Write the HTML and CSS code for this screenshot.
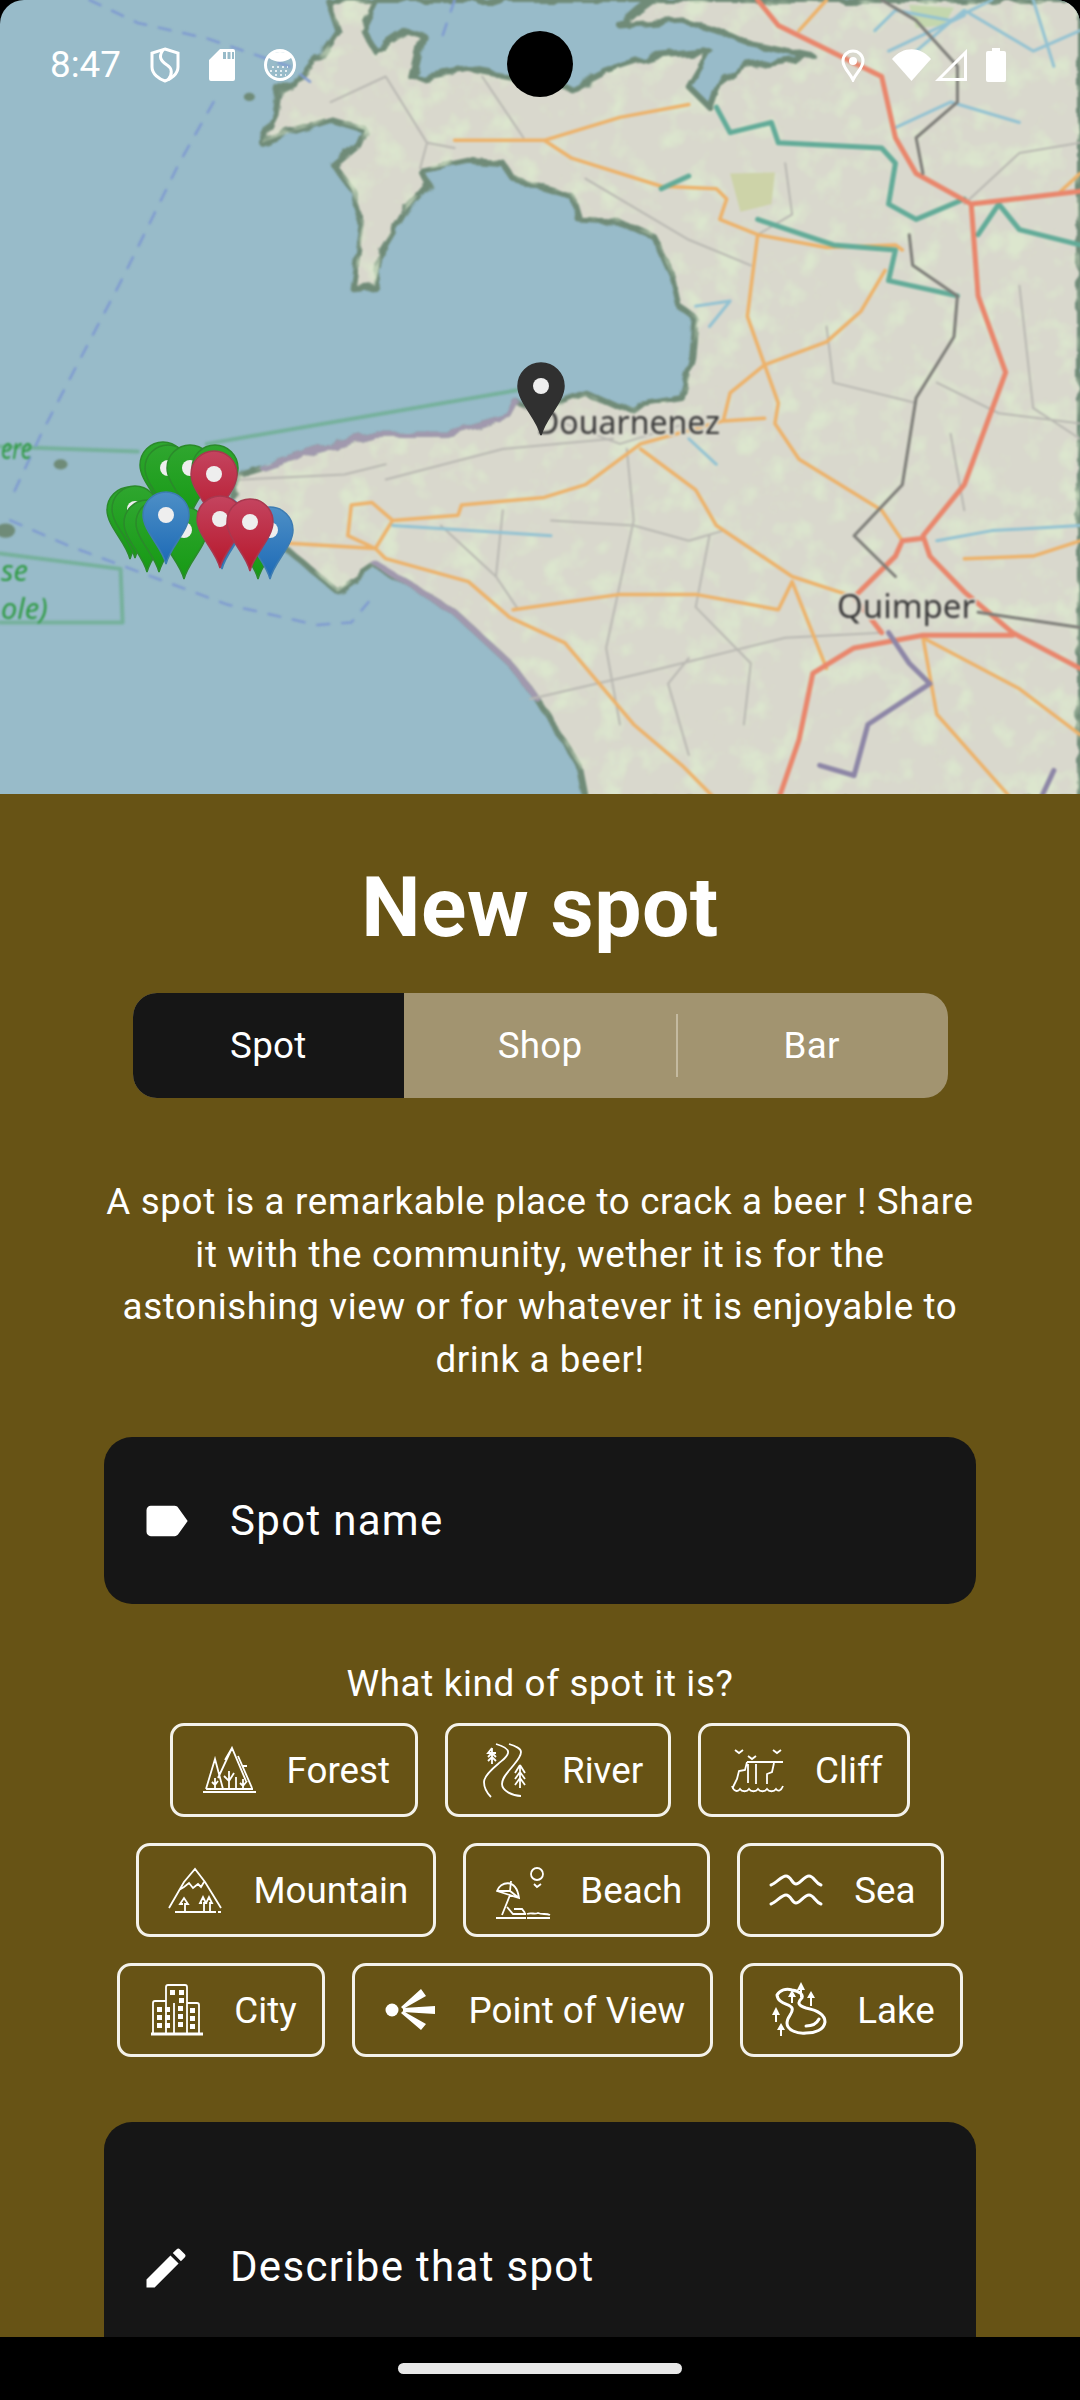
FILE: index.html
```html
<!DOCTYPE html>
<html>
	<head>
		<title>New spot</title>
		<link rel="stylesheet" href="styles.css">
	</head>
	<body>
		<div class="screen">
			<div class="map">
				<svg class="map-art" width="1080" height="800" viewBox="0 0 1080 800">
					<defs>
						<linearGradient id="gGreen" x1="0" y1="0" x2="0" y2="1"><stop offset="0" stop-color="#2fa62f"/><stop offset="1" stop-color="#169a14"/></linearGradient>
						<linearGradient id="gRed" x1="0" y1="0" x2="0" y2="1"><stop offset="0" stop-color="#c4445f"/><stop offset="1" stop-color="#b7182c"/></linearGradient>
						<linearGradient id="gBlue" x1="0" y1="0" x2="0" y2="1"><stop offset="0" stop-color="#4d8fc6"/><stop offset="1" stop-color="#1d6ab6"/></linearGradient>
						<g id="pin">
							<path class="pin-body" d="M0 0C-4-17-23-33-23-49A23 23 0 1 1 23-49C23-33 4-17 0 0Z"/>
							<circle class="pin-hole" cx="0" cy="-49" r="8"/>
						</g>
						<filter id="rough" x="-5%" y="-5%" width="110%" height="110%">
							<feTurbulence type="fractalNoise" baseFrequency=".05" numOctaves="2" seed="4"/>
							<feDisplacementMap in="SourceGraphic" scale="11"/>
						</filter>
						<filter id="mottle" x="0" y="0" width="100%" height="100%">
							<feTurbulence type="fractalNoise" baseFrequency=".035" numOctaves="3" seed="9"/>
							<feColorMatrix values="0 0 0 0 .72  0 0 0 0 .83  0 0 0 0 .62  3.5 0 0 0 -1.7"/>
							<feComposite in2="SourceAlpha" operator="in"/>
						</filter>
						<clipPath id="landClip">
							<path transform="scale(.6888 .5102)" d="M475 0L490 60 470 100 440 150 405 175 400 225 380 280 420 260 480 235 530 255 520 285 485 325 510 370 525 440 512 565 545 560 555 490 590 410 622 360 610 335 680 315 730 320 745 350 830 385 840 430 900 435 950 465 975 540 985 600 1010 625 1005 700 990 780 900 800 850 770 790 800 750 790 740 815 650 850 545 850 460 880 380 915 345 930 330 1060 420 1080 490 1160 545 1110 600 1150 660 1200 740 1300 780 1370 840 1500 850 1568 1568 1568 1568 0Z"/>
						</clipPath>
					</defs>

					<g class="blurred">
						<g filter="url(#rough)">
							<g transform="scale(.6888 .5102)">
								<path class="land" d="M475 0L490 60 470 100 440 150 405 175 400 225 380 280 420 260 480 235 530 255 520 285 485 325 510 370 525 440 512 565 545 560 555 490 590 410 622 360 610 335 680 315 730 320 745 350 830 385 840 430 900 435 950 465 975 540 985 600 1010 625 1005 700 990 780 900 800 850 770 790 800 750 790 740 815 650 850 545 850 460 880 380 915 345 930 330 1060 420 1080 490 1160 545 1110 600 1150 660 1200 740 1300 780 1370 840 1500 850 1568 1568 1568 1568 0Z"/>
							</g>
						</g>
						<g clip-path="url(#landClip)"><rect class="mottle" width="1080" height="800" filter="url(#mottle)"/></g>
						<g filter="url(#rough)">
							<g transform="scale(.6888 .5102)">
								<path class="water" d="M545 0L525 55 545 100 590 60 615 70 600 155 680 135 740 150 830 175 880 140 950 110 1030 100 1000 170 1030 210 1040 170 1080 130 1180 110 1090 85 1040 60 990 40 900 50 925 20 945 0Z"/>
								<path class="coast-purple" d="M750 790L740 815 650 850 545 850 460 880 380 915M545 1105L600 1150 660 1200 740 1300 780 1370"/>
							</g>
						</g>
						<g transform="scale(.6888 .5102)">
							<path class="patch" d="M1060 340L1125 338 1120 400 1075 415Z"/>
							<path class="patch-green" d="M1320 10L1385 15 1370 50 1330 55Z"/>
							<path class="grey" d="M480 200L560 150 620 280 660 290M620 280L610 330M700 150L760 270M850 350L1000 470 1090 520M1140 320L1150 420 1100 460M1200 640L1210 750 1330 790M1360 750L1450 810 1568 830M1400 400L1480 300 1568 280M760 800L900 870 1020 820M560 940L730 880 890 860M350 940L500 930 560 910M640 1030L720 1130 750 1190M730 1000L720 1130M910 880L920 1020 880 1270 900 1420M800 1020L920 1030 1000 1060 1050 1040M1030 1050L1010 1190 1090 1300 1080 1420M770 1370L930 1320 1140 1250 1280 1240M1380 850L1400 1000M1480 560L1500 800 1568 860M1000 1290L970 1340 1000 1480"/>
							<path class="road" d="M660 275L790 275 900 230 1000 205M790 275L830 310 960 365 1040 370 1055 390 1045 430 1100 460 1200 485 1300 480 1310 490M1100 460L1085 620 1110 715 1200 670 1250 610 1285 530M1110 715L1130 790 1125 830 1160 900 1280 1000 1310 1060M1110 715L1060 770 1050 825 930 870 850 950 790 975 670 990 665 1010 570 1020 540 985 510 990 505 1050 545 1075 420 1065M570 1020L545 1075 560 1095 680 1140 740 1210 820 1260 920 1420 990 1500 1040 1568M930 880L1010 960 1040 1030 1150 1130 1240 1170M745 1195L900 1165 1010 1165 1130 1195 1150 1140 1200 1310M1340 1250L1480 1350 1568 1440M1340 1250L1360 1400 1470 1568M1110 820L1050 825M1568 340L1540 375M1400 1095L1500 1090 1568 1060M1200 0L1160 60"/>
							<path class="river" d="M1270 60L1300 20 1380 40 1440 0M1290 100L1400 30M1330 100L1400 20 1500 100 1568 60M1500 0L1530 130M1300 250L1380 200 1480 240M1010 600L1060 590 1030 640M1000 860L1040 910M1360 1060L1440 1040 1568 1030M570 1030L800 1050"/>
							<path class="river-green" d="M1040 210L1060 260 1120 240 1130 280 1280 290 1300 320 1290 400 1330 430 1400 390M1420 460L1450 400 1480 450 1568 480M1100 430L1210 480 1300 490 1290 550 1390 580M960 370L1000 345"/>
							<path class="red-road" d="M1100 0L1130 50 1280 150 1300 270 1330 340 1410 400 1568 375M1410 400L1420 580 1460 730 1400 950 1340 1050 1350 1090 1400 1160 1470 1240 1568 1310M1340 1055L1310 1060 1300 1090 1240 1170 1280 1240M1470 1245L1340 1245 1240 1270 1180 1320 1160 1450 1130 1568"/>
							<path class="rail" d="M1280 0L1330 40 1390 130 1390 200 1330 270 1340 340M1320 460L1325 520 1390 580 1385 660 1330 780 1310 950 1240 1050 1300 1130M1420 1200L1568 1230"/>
							<path class="estuary" d="M1290 1240L1320 1300 1350 1340 1260 1420 1240 1520 1190 1500M1510 1568L1530 1510"/>
							<path class="park" d="M750 765L300 870M0 875L200 885M0 1085L175 1115 178 1220 0 1220"/>
							<path class="dash" d="M310 200L260 320 180 540 110 720 60 850 15 980M15 1020L100 1070 180 1110 330 1185 460 1225 510 1220 535 1180M130 0L200 45 300 75 420 130 460 170M660 0L640 80"/>
							<circle class="island" cx="88" cy="910" r="10"/>
							<circle class="island" cx="8" cy="1040" r="14"/>
							<circle class="island" cx="362" cy="190" r="8"/>
						</g>
						<text class="map-city" x="536" y="434">Douarnenez</text>
						<text class="map-city map-city-big" x="837" y="618">Quimper</text>
						<text class="map-park" x="1" y="459" textLength="31" lengthAdjust="spacingAndGlyphs">ere</text>
						<text class="map-park" x="1" y="581">se</text>
						<text class="map-park" x="1" y="619">ole)</text>
					</g>

					<use href="#pin" class="pin-green" x="163" y="514"/>
					<use href="#pin" class="pin-green" x="168" y="517"/>
					<use href="#pin" class="pin-green" x="190" y="517"/>
					<use href="#pin" class="pin-green" x="215" y="517"/>
					<use href="#pin" class="pin-green" x="130" y="559"/>
					<use href="#pin" class="pin-green" x="135" y="558"/>
					<use href="#pin" class="pin-green" x="147" y="572"/>
					<use href="#pin" class="pin-green" x="159" y="572"/>
					<use href="#pin" class="pin-green" x="184" y="579"/>
					<use href="#pin" class="pin-green" x="258" y="579"/>
					<use href="#pin" class="pin-blue" x="270" y="579"/>
					<use href="#pin" class="pin-blue" x="222" y="569"/>
					<use href="#pin" class="pin-red" x="214" y="523"/>
					<use href="#pin" class="pin-blue" x="166" y="564"/>
					<use href="#pin" class="pin-red" x="220" y="568"/>
					<use href="#pin" class="pin-red" x="250" y="571"/>
					<use href="#pin" class="pin-dark" x="541" y="435"/>
				</svg>

				<div class="status-bar">
					<div class="status-left">
						<span class="clock">8:47</span>
						<svg class="st-icon" width="30" height="36" viewBox="0 0 30 36"><path class="st-line" d="M15 2L28 6V20C28 27 21 32 15 34 9 32 2 27 2 20V6Z"/><path class="st-line" d="M13 3C8 10 11 14 17 18 22 21 23 27 18 33"/></svg>
						<svg class="st-icon" width="26" height="32" viewBox="0 0 26 32"><path class="st-fill" fill-rule="evenodd" d="M11 0H24A2 2 0 0 1 26 2V30A2 2 0 0 1 24 32H2A2 2 0 0 1 0 30V11ZM14 3V10H17V3ZM18.5 3V10H21.5V3ZM23 3V10H25V3Z"/></svg>
						<svg class="st-icon" width="32" height="34" viewBox="0 0 32 34"><circle class="st-line" cx="16" cy="17" r="14.5"/><path class="st-fill" d="M5 10C12 15 20 15 27 10L27 7C20 3 12 3 5 7Z"/><path class="st-dots" d="M8 19H24M6 23H26M11 27H22"/></svg>
					</div>
					<div class="status-right">
						<svg class="st-icon" width="24" height="33" viewBox="0 0 24 33"><path class="st-line" d="M12 31C9 24 2 19 2 12A10 10 0 0 1 22 12C22 19 15 24 12 31Z"/><circle class="st-fill" cx="12" cy="12" r="4"/></svg>
						<svg class="st-icon" width="39" height="32" viewBox="0 0 39 32"><path class="st-fill" d="M0 10C11 -3 28 -3 39 10L19.5 32Z"/></svg>
						<svg class="st-icon st-signal" width="32" height="32" viewBox="0 0 32 32"><path class="st-line" d="M30.5 3.5V30.5H3.5Z"/></svg>
						<svg class="st-icon st-battery" width="20" height="34" viewBox="0 0 20 34"><path class="st-fill" d="M6 0H14V3H18A2 2 0 0 1 20 5V32A2 2 0 0 1 18 34H2A2 2 0 0 1 0 32V5A2 2 0 0 1 2 3H6Z"/></svg>
					</div>
				</div>
				<div class="camera"></div>
			</div>

			<div class="panel">
				<h1 class="title">New spot</h1>

				<div class="segments">
					<div class="segment segment-on">Spot</div>
					<div class="segment">Shop</div>
					<div class="segment segment-split">Bar</div>
				</div>

				<p class="intro">A spot is a remarkable place to crack a beer ! Share it with the community, wether it is for the astonishing view or for whatever it is enjoyable to drink a beer!</p>

				<div class="field">
					<svg class="field-icon" viewBox="0 0 24 24"><path d="M17.63 5.84C17.27 5.33 16.67 5 16 5L5 5.01C3.9 5.01 3 5.9 3 7v10c0 1.1.9 1.99 2 1.99L16 19c.67 0 1.27-.33 1.63-.84L22 12l-4.37-6.16z"/></svg>
					<span>Spot name</span>
				</div>

				<div class="kind-label">What kind of spot it is?</div>

				<div class="chips">
					<div class="chip">
						<svg class="chip-icon" viewBox="0 0 54 54"><path d="M0 49H53M3 46L12 16 20 46M3 46H50M15 35L29 5 43 38M22 17L29 5M35 13L49 45M39 23L44 23M12 46V35M9 39L12 42 15 38M26 46V28M21 33L26 38 31 30M33 46V34M40 46V36M37 40L40 43 44 38"/></svg>
						<span>Forest</span>
					</div>
					<div class="chip">
						<svg class="chip-icon" viewBox="0 0 54 54"><path d="M18 1C25 3 31 6 30 10 29 15 23 18 20 21 14 26 6 33 6 39 6 45 10 51 13 54M31 1C37 3 43 5 43 9 43 14 38 19 34 24 29 30 24 35 24 41 24 48 35 53 43 53"/><path d="M14 5V21M14 5L10 10H18M10 14L14 10 18 14M10 18L14 14 18 18M42 22V45M42 22L37 30M42 22L47 30M37 36L42 29 47 36M37 42L42 35 47 42"/></svg>
						<span>River</span>
					</div>
					<div class="chip">
						<svg class="chip-icon" viewBox="0 0 54 54"><path d="M16 19H52M16 19L14 27 8 28 6 36 2 44V46M17 21V40M25 21V41M43 20L41 29 36 31V41M1 43C3 49 7 49 9 46 11 49 16 49 18 46 20 49 25 49 27 46 29 49 34 49 36 46 38 49 43 49 45 46 47 49 50 48 52 43M4 7L8 10 12 7M17 13L21 16 25 13M42 7L46 10 50 7"/></svg>
						<span>Cliff</span>
					</div>
					<div class="chip">
						<svg class="chip-icon" viewBox="0 0 54 54"><path d="M0 45L15 19 26 6 36 19 52 45M10 27L15 24 20 20 24 25 29 21 32 24 35 19M6 49H47M49 49H52M14 41L11 41 15 35 19 41H16V48M33 40L31 40 34 34 37 40H35V48M38 40L37 40 40 34 43 40H41V48"/></svg>
						<span>Mountain</span>
					</div>
					<div class="chip">
						<svg class="chip-icon" viewBox="0 0 54 54"><circle cx="41" cy="11" r="6"/><path d="M38 21L41 24 45 21M14 32L6 52M1 28C4 19 20 14 23 35ZM1 28L14 28 23 35M14 28L15 18M11 44L17 51H30M18 46H26L29 50M0 55H30M31 51C36 49 38 52 42 50 46 52 50 50 54 52M31 55H54"/></svg>
						<span>Beach</span>
					</div>
					<div class="chip">
						<svg class="chip-icon chip-icon-bold" viewBox="0 0 54 54"><path d="M1 22C7 20 11 13 16 13S22 21 26 21 34 13 39 13 45 20 51 22M1 41C7 39 11 32 16 32S22 40 26 40 34 32 39 32 45 39 51 41"/></svg>
						<span>Sea</span>
					</div>
					<div class="chip">
						<svg class="chip-icon" viewBox="0 0 54 54"><path class="chip-thick" d="M1 51H53"/><path d="M3 51V20Q3 18 5 18H16M16 51V4Q16 2 18 2H35Q37 2 37 4V51M37 20H47Q49 20 49 22V51M24 20V51"/><path class="chip-solid" d="M20 7h5v5h-5zM29 7h5v5h-5zM29 15h5v5h-5zM7 24h5v5h-5zM15 24h5v5h-5zM7 32h5v5h-5zM15 32h5v5h-5zM7 40h5v5h-5zM15 40h5v5h-5zM28 23h5v5h-5zM28 31h5v5h-5zM28 39h5v5h-5zM40 25h5v5h-5zM40 33h5v5h-5zM40 41h5v5h-5z"/></svg>
						<span>City</span>
					</div>
					<div class="chip">
						<svg class="chip-icon" viewBox="0 0 54 54"><circle class="chip-solid" cx="7" cy="27" r="6.5"/><path class="chip-solid" d="M16 24L36 6 41 13 18 26ZM18 25L50 23V31L18 29ZM16 30L18 28 41 41 36 47Z"/></svg>
						<span>Point of View</span>
					</div>
					<div class="chip">
						<svg class="chip-icon chip-icon-bold" viewBox="0 0 54 54"><path d="M4 12C7 7 13 5 19 7 26 8 32 12 28 16 24 20 26 23 33 25 43 27 52 31 52 39 51 47 42 50 33 50 24 51 14 47 14 40 14 33 21 30 19 25 17 21 5 21 4 12ZM33 43C40 43 44 40 46 36"/><path class="chip-solid" d="M28 -1L32 7H29V14H27V7H24ZM19 7L23 14H20V20H18V14H15ZM38 8L42 15H39V23H37V15H34ZM3 24L7 32H4V39H2V32H-1ZM8 40L12 47H9V53H7V47H4Z"/></svg>
						<span>Lake</span>
					</div>
				</div>

				<div class="describe">
					<svg class="field-icon" viewBox="0 0 24 24"><path d="M3 17.25V21h3.75L17.81 9.94l-3.75-3.75L3 17.25zM20.71 7.04c.39-.39.39-1.02 0-1.41l-2.34-2.34c-.39-.39-1.02-.39-1.41 0l-1.83 1.83 3.75 3.75 1.83-1.83z"/></svg>
					<span>Describe that spot</span>
				</div>
			</div>

			<div class="nav-bar"><div class="nav-handle"></div></div>
		</div>
	</body>
</html>
```

FILE: styles.css
```css
* {
	box-sizing: border-box;
}
body {
	margin: 0;
	background: #000;
	font-family: Roboto, sans-serif;
	color: #fff;
}
.screen {
	width: 1080px;
	height: 2400px;
	display: flex;
	flex-direction: column;
	overflow: hidden;
	background: #000;
}

/* map */
.map {
	position: relative;
	height: 794px;
	flex: none;
	overflow: hidden;
	background: #98bbc9;
	border-radius: 24px 24px 0 0;
}
.map-art {
	display: block;
}
.blurred {
	filter: blur(1px);
}
.land {
	fill: #d9d8cd;
	stroke: #6f8b78;
	stroke-width: 6px;
	vector-effect: non-scaling-stroke;
	stroke-linejoin: round;
}
.water {
	fill: #98bbc9;
	stroke: #6f8b78;
	stroke-width: 6px;
	vector-effect: non-scaling-stroke;
	stroke-linejoin: round;
}
.coast-purple,
.grey,
.road,
.river,
.river-green,
.red-road,
.rail,
.estuary,
.park,
.dash {
	fill: none;
	vector-effect: non-scaling-stroke;
	stroke-linejoin: round;
	stroke-linecap: round;
}
.mottle {
	fill: #fff;
	opacity: .75;
}
.coast-purple {
	stroke: #a199ae;
	stroke-width: 6px;
}
.patch {
	fill: #cdd3a8;
}
.patch-green {
	fill: #c4d7ae;
}
.grey {
	stroke: #b9b8b2;
	stroke-width: 2px;
}
.road {
	stroke: #edb26a;
	stroke-width: 3.5px;
}
.river {
	stroke: #93c2d2;
	stroke-width: 3px;
}
.river-green {
	stroke: #62ab98;
	stroke-width: 5px;
}
.red-road {
	stroke: #e9866c;
	stroke-width: 5px;
}
.rail {
	stroke: #7d7d78;
	stroke-width: 3px;
}
.estuary {
	stroke: #8d86a6;
	stroke-width: 5px;
}
.park {
	stroke: #76b19c;
	stroke-width: 4px;
}
.dash {
	stroke: #7f9bd0;
	stroke-width: 2.5px;
	stroke-dasharray: 12 13;
}
.island {
	fill: #6f8b78;
}
.map-city {
	font-family: "Noto Sans", sans-serif;
	font-size: 32px;
	fill: #3a3a3a;
	stroke: #d9d8cd;
	stroke-width: 4px;
	paint-order: stroke;
}
.map-city-big {
	font-size: 33px;
}
.map-park {
	font-family: "Noto Sans", sans-serif;
	font-style: italic;
	font-size: 29px;
	fill: #2f9a44;
}
.pin-body {
	stroke-width: 1.5px;
}
.pin-hole {
	fill: #eeeeee;
	stroke: none;
}
.pin-green {
	fill: url(#gGreen);
	stroke: #2b8a2b;
}
.pin-red {
	fill: url(#gRed);
	stroke: #a8384f;
}
.pin-blue {
	fill: url(#gBlue);
	stroke: #3d7cb2;
}
.pin-dark {
	fill: #303030;
	stroke: #303030;
}

/* status bar */
.status-bar {
	position: absolute;
	top: 47px;
	left: 0;
	right: 0;
	display: flex;
	justify-content: space-between;
	padding: 0 74px 0 50px;
}
.status-left,
.status-right {
	display: flex;
	align-items: center;
	gap: 29px;
}
.status-right {
	gap: 27px;
}
.clock {
	font-size: 36.75px;
	line-height: 34px;
}
.st-icon {
	display: block;
}
.st-signal {
	margin-left: -23px;
}
.st-battery {
	margin-left: -8px;
}
.st-line {
	fill: none;
	stroke: #fff;
	stroke-width: 3px;
}
.st-fill {
	fill: #fff;
}
.st-dots {
	fill: none;
	stroke: #fff;
	stroke-width: 1.5px;
	stroke-dasharray: 2 3;
}
.camera {
	position: absolute;
	top: 31px;
	left: 507px;
	width: 66px;
	height: 66px;
	border-radius: 50%;
	background: #000;
}

/* panel */
.panel {
	flex: 1;
	min-height: 0;
	overflow: hidden;
	background: #675315;
	padding: 67px 104px 0;
}
.title {
	margin: 0 0 38px;
	text-align: center;
	font-size: 84px;
	letter-spacing: .5px;
	line-height: 94px;
	font-weight: 700;
}
.segments {
	width: 815px;
	height: 105px;
	margin: 0 auto 78px;
	display: flex;
	border-radius: 24px;
	overflow: hidden;
	background: #a29470;
}
.segment {
	flex: 1;
	position: relative;
	display: flex;
	align-items: center;
	justify-content: center;
	font-size: 36.75px;
	letter-spacing: .26px;
}
.segment-on {
	background: #161616;
}
.segment-split::before {
	content: "";
	position: absolute;
	left: 0;
	top: 21px;
	bottom: 21px;
	width: 2px;
	background: #c4baa0;
}
.intro {
	margin: 0 0 51px;
	text-align: center;
	font-size: 36.75px;
	letter-spacing: .65px;
	line-height: 52.5px;
}
.field {
	height: 167px;
	display: flex;
	align-items: center;
	gap: 38px;
	padding-left: 36px;
	border-radius: 28px;
	background: #161616;
	font-size: 42px;
	letter-spacing: 1.31px;
	margin-bottom: 55px;
}
.field-icon {
	width: 52px;
	height: 52px;
	flex: none;
	fill: #fff;
}
.kind-label {
	text-align: center;
	font-size: 36.75px;
	letter-spacing: .65px;
	line-height: 50px;
	margin-bottom: 14px;
}
.chips {
	display: flex;
	flex-wrap: wrap;
	justify-content: center;
	gap: 26px 27px;
	margin-bottom: 65px;
}
.chip {
	height: 94px;
	display: flex;
	align-items: center;
	gap: 30px;
	padding: 0 25px 0 30px;
	border: 3px solid #f4f2ea;
	border-radius: 14px;
	font-size: 36.75px;
}
.chip-icon {
	width: 54px;
	height: 54px;
	flex: none;
	fill: none;
	stroke: #fff;
	stroke-width: 1.8px;
	overflow: visible;
}
.chip-icon-bold {
	stroke-width: 3px;
	stroke-linecap: round;
}
.chip-thick {
	stroke-width: 3px;
}
.chip-solid {
	fill: #fff;
	stroke: none;
}
.describe {
	height: 320px;
	display: flex;
	align-items: flex-start;
	gap: 38px;
	padding: 120px 0 0 36px;
	border-radius: 28px;
	background: #161616;
	font-size: 42px;
	letter-spacing: 1.31px;
}

/* nav */
.nav-bar {
	height: 63px;
	flex: none;
	background: #000;
	padding-top: 26px;
}
.nav-handle {
	width: 284px;
	height: 11px;
	margin: 0 auto;
	border-radius: 6px;
	background: #e8e8e8;
}
```
